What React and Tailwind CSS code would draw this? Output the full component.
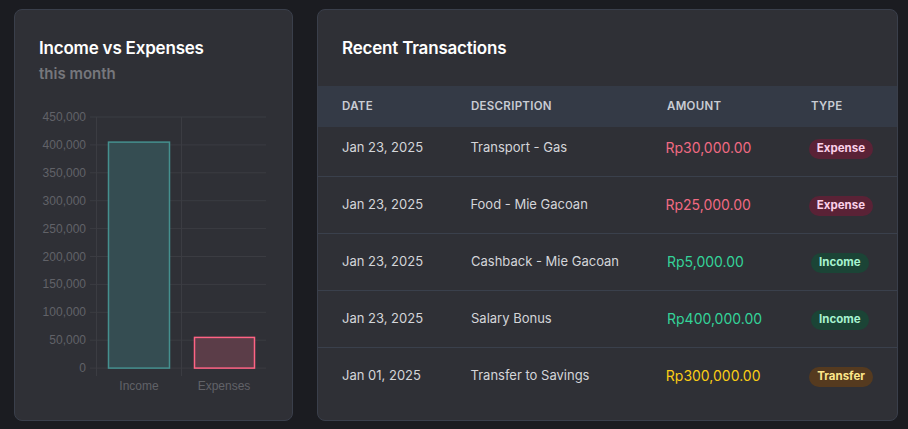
import React from 'react';

const transactions = [
    { date: 'Jan 23, 2025', desc: 'Transport - Gas', amount: 'Rp30,000.00', type: 'Expense' },
    { date: 'Jan 23, 2025', desc: 'Food - Mie Gacoan', amount: 'Rp25,000.00', type: 'Expense' },
    { date: 'Jan 23, 2025', desc: 'Cashback - Mie Gacoan', amount: 'Rp5,000.00', type: 'Income' },
    { date: 'Jan 23, 2025', desc: 'Salary Bonus', amount: 'Rp400,000.00', type: 'Income' },
    { date: 'Jan 01, 2025', desc: 'Transfer to Savings', amount: 'Rp300,000.00', type: 'Transfer' },
];

const amountColor = {
    Expense: 'text-[#f16a82]',
    Income: 'text-[#34d399]',
    Transfer: 'text-[#facc15]',
};

const badgeColor = {
    Expense: 'bg-[#5a2236] text-[#fbcfe8]',
    Income: 'bg-[#1b4436] text-[#a7f3d0]',
    Transfer: 'bg-[#553a1f] text-[#fde68a]',
};

const BarChart = () => {
    const top = 116;
    const step = 27.9;
    const ticks = [450000, 400000, 350000, 300000, 250000, 200000, 150000, 100000, 50000, 0];
    const y = (v) => top + ((450000 - v) / 50000) * step;

    return (
        <svg width="279" height="300" viewBox="14 100 279 300" className="block">
            {ticks.map((t) => (
                <g key={t}>
                    <line x1="90" x2="266" y1={y(t)} y2={y(t)} stroke="#3b3c42" strokeWidth="1" />
                    <text
                        x="86"
                        y={y(t) + 4}
                        textAnchor="end"
                        fontSize="12"
                        fill="#616268"
                        fontFamily="'Liberation Sans', Arial, sans-serif"
                    >
                        {t.toLocaleString('en-US')}
                    </text>
                </g>
            ))}
            {[96.5, 181.5].map((x) => (
                <line key={x} x1={x} x2={x} y1={top} y2="375" stroke="#3b3c42" strokeWidth="1" />
            ))}
            <rect x="108.5" y={y(405000)} width="61" height={y(0) - y(405000)} fill="#354d52" stroke="#45908f" strokeWidth="1.5" />
            <rect x="194.5" y={y(55000)} width="60" height={y(0) - y(55000)} fill="#5b3d48" stroke="#ff6384" strokeWidth="1.5" />
            <text x="139" y="389" textAnchor="middle" fontSize="12" fill="#616268" fontFamily="'Liberation Sans', Arial, sans-serif">Income</text>
            <text x="224" y="389" textAnchor="middle" fontSize="12" fill="#616268" fontFamily="'Liberation Sans', Arial, sans-serif">Expenses</text>
        </svg>
    );
};

export default function App() {
    return (
        <div className="w-[908px] h-[429px] bg-[#1b1c21] pt-[9px] pl-[14px] flex gap-[24px] font-['Inter',sans-serif]">
            {/* Chart card */}
            <div className="w-[279px] h-[412px] bg-[#2f3036] border border-[#3a3f4b] rounded-lg flex flex-col overflow-hidden">
                <div className="px-6 pt-[27px]">
                    <h2 className="text-[17px] font-semibold text-white leading-[22px] tracking-[-0.2px]">Income vs Expenses</h2>
                    <p className="text-[15px] font-semibold text-[#76777c] leading-[20px] mt-[5px]">this month</p>
                </div>
                <div className="-ml-px mt-[17px]">
                    <BarChart />
                </div>
            </div>

            {/* Transactions card */}
            <div className="w-[581px] h-[412px] bg-[#2f3036] border border-[#3a3f4b] rounded-lg flex flex-col overflow-hidden">
                <div className="h-[76px] px-6 pt-px flex items-center">
                    <h2 className="text-[17px] font-semibold text-white tracking-[-0.2px]">Recent Transactions</h2>
                </div>
                <div className="h-[41px] bg-[#343a46] flex items-center px-6 text-[11.5px] font-semibold text-[#c9ccd3] tracking-wide">
                    <div className="w-[129px]">DATE</div>
                    <div className="w-[196px]">DESCRIPTION</div>
                    <div className="w-[144px]">AMOUNT</div>
                    <div>TYPE</div>
                </div>
                {transactions.map((t, i) => (
                    <div
                        key={i}
                        className={`flex items-center px-6 text-[13px] text-[#d4d5d9] ${i === 0 ? 'h-[49px] pb-[8px]' : 'h-[57px] pb-px border-t border-[#3a404c]'}`}
                    >
                        <div className="w-[129px]">{t.date}</div>
                        <div className="w-[196px]">{t.desc}</div>
                        <div className={`w-[144px] text-[14px] ${amountColor[t.type]}`}>{t.amount}</div>
                        <div>
                            <span className={`inline-flex items-center h-[20px] px-[8px] rounded-full text-[11.5px] font-bold mt-[3px] ${badgeColor[t.type]}`}>
                                {t.type}
                            </span>
                        </div>
                    </div>
                ))}
            </div>
        </div>
    );
}
